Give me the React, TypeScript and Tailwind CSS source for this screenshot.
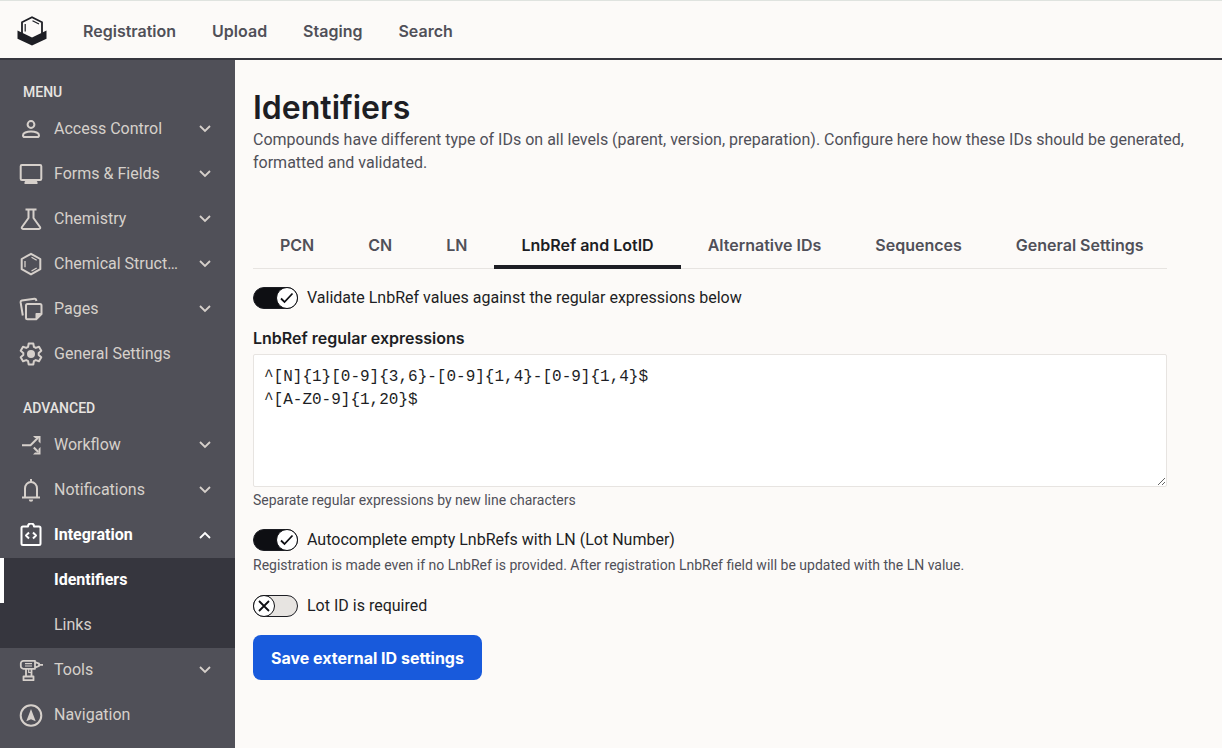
import { useState } from "react"
import type { ReactNode } from "react"

type MenuItem = {
  label: string
  icon: ReactNode
  expandable?: boolean
  children?: string[]
}

const Icon = ({ children }: { children: ReactNode }) => (
  <svg
    className="size-6 shrink-0"
    viewBox="0 0 24 24"
    fill="none"
    stroke="currentColor"
    strokeWidth="2"
    strokeLinejoin="round"
    aria-hidden="true"
  >
    {children}
  </svg>
)

const menu: MenuItem[] = [
  {
    label: "Access Control",
    expandable: true,
    icon: (
      <Icon>
        <circle cx="12" cy="7.500" r="3.400" />
        <path d="M4 18.200c0-2.200 3.600-3.700 8-3.700s8 1.500 8 3.700c0 1.200-.6 1.800-1.600 1.800H5.600C4.600 20 4 19.400 4 18.200z" />
      </Icon>
    ),
  },
  {
    label: "Forms & Fields",
    expandable: true,
    icon: (
      <Icon>
        <rect x="1.700" y="3" width="20.600" height="15" rx="1.200" />
        <path d="M7 18h10l1.500 2v2h-13v-2z" fill="currentColor" stroke="none" />
      </Icon>
    ),
  },
  {
    label: "Chemistry",
    expandable: true,
    icon: (
      <Icon>
        <path d="M6.500 2.500h11M9.500 3v8L3 20c-.7 1 0 2 1 2h16c1 0 1.700-1 1-2l-6.500-9V3" />
      </Icon>
    ),
  },
  {
    label: "Chemical Struct…",
    expandable: true,
    icon: (
      <Icon>
        <path d="M12 1.800l9.300 5.200v10.200L12 22.400l-9.300-5.200V7z" />
        <path d="M6 9v6.200M12.500 5.200l5.200 3M12.500 19l5.200-3" strokeWidth="1.300" />
      </Icon>
    ),
  },
  {
    label: "Pages",
    expandable: true,
    icon: (
      <Icon>
        <path d="M3.800 18.500L1.600 5.200c-.1-.9.300-1.500 1.200-1.700L15.500 1.800c.9-.1 1.500.3 1.700 1.200l.2 1" />
        <path d="M8.500 7H21c.9 0 1.500.6 1.500 1.500V17l-5.300 5.300H8.500c-.9 0-1.500-.6-1.500-1.500V8.500C7 7.600 7.600 7 8.500 7z" />
        <path d="M22.500 16H17.500c-.6 0-1 .4-1 1v5.500z" fill="currentColor" stroke="none" />
      </Icon>
    ),
  },
  {
    label: "General Settings",
    icon: (
      <Icon>
        <path d="M9.700 1.500h4.600l.6 3.300 1.900 1.100 3.200-1.200 2.300 4-2.600 2.200v2.200l2.600 2.200-2.300 4-3.200-1.200-1.900 1.100-.6 3.300H9.700l-.6-3.300-1.900-1.100L4 19.300l-2.300-4 2.600-2.200v-2.200L1.700 8.700l2.300-4 3.200 1.200 1.900-1.100z" />
        <circle cx="12" cy="12" r="4" fill="currentColor" stroke="none" />
      </Icon>
    ),
  },
]

const advanced: MenuItem[] = [
  {
    label: "Workflow",
    expandable: true,
    icon: (
      <Icon>
        <path d="M3 12.300h8.500L19 4.800M14.800 14.500l4.500 4.500" />
        <path d="M14 3h7.500v7.500l-2-2V5H16zM21.500 14v7.500H14l2-2h3.500V16z" fill="currentColor" stroke="none" />
      </Icon>
    ),
  },
  {
    label: "Notifications",
    expandable: true,
    icon: (
      <Icon>
        <path d="M3 19.500h18M6 19.500V10.500c0-3.700 2.600-6.500 6-6.500s6 2.800 6 6.500v9M12 1v3" />
        <path d="M9.800 21.500h4.400a2.200 2.200 0 0 1-4.400 0z" fill="currentColor" stroke="none" />
      </Icon>
    ),
  },
  {
    label: "Integration",
    expandable: true,
    children: ["Identifiers", "Links"],
    icon: (
      <Icon>
        <path d="M9 3.500a3 3 0 0 1 6 0h5c.9 0 1.500.6 1.500 1.500v15.500c0 .9-.6 1.500-1.500 1.500H4c-.9 0-1.500-.6-1.500-1.500V5c0-.9.6-1.500 1.500-1.500z" />
        <path d="M10 9.500l-3 3 3 3M14 9.500l3 3-3 3" />
      </Icon>
    ),
  },
  {
    label: "Tools",
    expandable: true,
    icon: (
      <Icon>
        <path d="M4.500 2.800H16v8H4.500A2.700 2.700 0 0 1 1.800 8V5.500a2.700 2.700 0 0 1 2.700-2.700zM16 4l4 1.600v2.400L16 9.600M20 6.800h4M7 11v7M12.500 11v7M4.500 18.500h10v3.700h-10z" strokeWidth="1.800" />
        <path d="M6 5.700h7M6 8h7M9.700 11v3.500h3" strokeWidth="1.200" />
      </Icon>
    ),
  },
  {
    label: "Navigation",
    icon: (
      <Icon>
        <circle cx="12" cy="12.500" r="10.300" />
        <path d="M12 6l4.700 12.300-4.700-2-4.700 2z" fill="currentColor" stroke="none" />
      </Icon>
    ),
  },
]

const tabs = ["PCN", "CN", "LN", "LnbRef and LotID", "Alternative IDs", "Sequences", "General Settings"]

const Chevron = ({ up }: { up?: boolean }) => (
  <svg className="size-3 shrink-0" viewBox="0 0 12 12" fill="none" stroke="currentColor" strokeWidth="1.800" aria-hidden="true">
    <path d={up ? "M1 9l5-5 5 5" : "M1 3l5 5 5-5"} />
  </svg>
)

const SideItem = ({ item }: { item: MenuItem }) => {
  const open = !!item.children

  return (
    <li>
      <button
        type="button"
        aria-expanded={item.expandable ? open : undefined}
        className={`flex h-[45px] w-full items-center pr-6 pb-0.5 pl-[19px] text-left ${open ? "font-bold text-white" : "text-[#d6d0cb]"}`}
      >
        {item.icon}
        <span className="ml-[11px] whitespace-nowrap">{item.label}</span>
        {item.expandable && (
          <span className="ml-auto">
            <Chevron up={open} />
          </span>
        )}
      </button>
      {item.children && (
        <ul className="bg-[#36363e]">
          {item.children.map((child, i) => (
            <li key={child}>
              <a
                href="#"
                className={`flex h-[45px] items-center border-l-4 pb-0.5 pl-[50px] ${
                  i === 0 ? "border-white font-bold text-white" : "border-transparent text-[#d6d0cb]"
                }`}
              >
                {child}
              </a>
            </li>
          ))}
        </ul>
      )}
    </li>
  )
}

const Toggle = ({ label, initial }: { label: string; initial: boolean }) => {
  const [on, setOn] = useState(initial)

  return (
    <label className="flex h-[23px] cursor-pointer items-center gap-[9px] text-base text-[#1d1e24]">
      <span className="relative h-[22px] w-[45px] shrink-0">
        <input
          type="checkbox"
          checked={on}
          onChange={() => setOn(!on)}
          className="block h-full w-full appearance-none rounded-full border border-[#1d1e24] bg-[#e7e4e1] checked:bg-[#0e0f13]"
        />
        <svg
          className={`pointer-events-none absolute top-0 size-[22px] ${on ? "right-0" : "left-0"}`}
          viewBox="0 0 22 22"
          fill="none"
          stroke="#0e0f13"
        >
          <circle cx="11" cy="11" r="10.500" fill="#fff" />
          <path d={on ? "M5 11.500l3.500 3.500 8-8.500" : "M6 6l10 10M16 6L6 16"} strokeWidth="1.800" />
        </svg>
      </span>
      {label}
    </label>
  )
}

const App = () => {
  const [tab, setTab] = useState("LnbRef and LotID")

  return (
    <div className="flex min-h-screen flex-col bg-[#fcfaf8] font-['Roboto',sans-serif] text-base">
      <header className="flex h-[60px] items-center border-t border-b-2 border-t-[#dfe3df] border-b-[#36363e] pt-0.5 pl-[17px]">
        <a href="#" aria-label="Home">
          <svg className="size-[30px]" viewBox="0 0 30 30" fill="none" stroke="#1d1e24">
            <path d="M5 17V6.200L15 1.200l10 5V17" strokeWidth="1.800" />
            <path d="M8.200 8v7.500M15.500 4.800l6.500 3.200" strokeWidth="1.200" />
            <path d="M.5 14.500L15 21.500l14.500-7v8.200L15 29.500.5 22.700z" fill="#1d1e24" stroke="none" />
          </svg>
        </a>
        <nav className="ml-9 flex gap-9 font-['Inter',sans-serif] text-base font-semibold text-[#505058]">
          <a href="#">Registration</a>
          <a href="#">Upload</a>
          <a href="#">Staging</a>
          <a href="#">Search</a>
        </nav>
      </header>

      <div className="flex grow">
        <aside className="w-[235px] shrink-0 bg-[#505058]">
          <h2 className="flex h-[47px] items-end pb-1 pl-[23px] text-sm leading-[22px] font-medium text-[#e7e4e1]">MENU</h2>
          <ul>
            {menu.map((item) => (
              <SideItem key={item.label} item={item} />
            ))}
          </ul>
          <h2 className="flex h-[46px] items-end pb-1 pl-[23px] text-sm leading-[22px] font-medium text-[#e7e4e1]">ADVANCED</h2>
          <ul>
            {advanced.map((item) => (
              <SideItem key={item.label} item={item} />
            ))}
          </ul>
        </aside>

        <main className="min-w-0 grow pt-7 pr-[15px] pb-8 pl-[18px]">
          <h1 className="font-['Inter',sans-serif] text-[32px] leading-10 font-semibold text-[#1d1e24]">Identifiers</h1>
          <p className="leading-[23px] text-[#505058]">
            Compounds have different type of IDs on all levels (parent, version, preparation). Configure here how these IDs
            should be generated, formatted and validated.
          </p>

          <div className="mr-10">
            <div role="tablist" className="mt-11 flex h-[51px] border-b border-[#e7e4e1] font-['Inter',sans-serif] text-base font-semibold">
              {tabs.map((name) => (
                <button
                  key={name}
                  type="button"
                  role="tab"
                  aria-selected={tab === name}
                  onClick={() => setTab(name)}
                  className={`-mb-px border-b-4 px-[27px] pt-1.5 whitespace-nowrap ${
                    tab === name ? "border-[#1d1e24] text-[#1d1e24]" : "border-transparent text-[#505058]"
                  }`}
                >
                  {name}
                </button>
              ))}
            </div>

            <form className="pt-[17px]" onSubmit={(e) => e.preventDefault()}>
              <Toggle label="Validate LnbRef values against the regular expressions below" initial={true} />

              <label
                htmlFor="expressions"
                className="mt-[17px] block font-['Inter',sans-serif] text-base leading-6 font-semibold text-[#1d1e24]"
              >
                LnbRef regular expressions
              </label>
              <textarea
                id="expressions"
                spellCheck={false}
                className="mt-1 block h-[133px] w-full rounded-xs border border-[#e7e4e1] bg-white px-2.5 py-[11px] font-['Liberation_Mono',monospace] text-base leading-[23px] text-[#1d1e24]"
                defaultValue={"^[N]{1}[0-9]{3,6}-[0-9]{1,4}-[0-9]{1,4}$\n^[A-Z0-9]{1,20}$"}
              />
              <p className="mt-[3px] text-sm leading-5 text-[#505058]">Separate regular expressions by new line characters</p>

              <div className="mt-[18px]">
                <Toggle label="Autocomplete empty LnbRefs with LN (Lot Number)" initial={true} />
                <p className="mt-1 text-sm leading-5 text-[#505058]">
                  Registration is made even if no LnbRef is provided. After registration LnbRef field will be updated with
                  the LN value.
                </p>
              </div>

              <div className="mt-[19px]">
                <Toggle label="Lot ID is required" initial={false} />
              </div>

              <button
                type="submit"
                className="mt-[18px] h-[45px] rounded-lg bg-[#185adc] px-[18px] font-['Inter',sans-serif] text-base font-bold text-white"
              >
                Save external ID settings
              </button>
            </form>
          </div>
        </main>
      </div>
    </div>
  )
}

export default App
